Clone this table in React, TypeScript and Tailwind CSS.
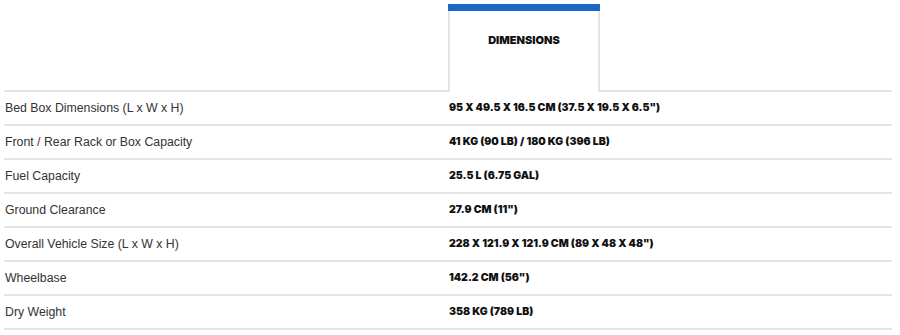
const specs: [string, string][] = [
  ["Bed Box Dimensions (L x W x H)", '95 X 49.5 X 16.5 CM (37.5 X 19.5 X 6.5")'],
  ["Front / Rear Rack or Box Capacity", "41 KG (90 LB) / 180 KG (396 LB)"],
  ["Fuel Capacity", "25.5 L (6.75 GAL)"],
  ["Ground Clearance", '27.9 CM (11")'],
  ["Overall Vehicle Size (L x W x H)", '228 X 121.9 X 121.9 CM (89 X 48 X 48")'],
  ["Wheelbase", '142.2 CM (56")'],
  ["Dry Weight", "358 KG (789 LB)"],
];

const display = "font-['Inter',sans-serif] font-black uppercase text-[#111]";

export default function App() {
  return (
    <div className="w-[900px] h-[335px] bg-white pl-[4px] pr-[8px] font-['Liberation_Sans',Arial,sans-serif]">
      {/* tab header */}
      <div className="flex pt-[4px]">
        <div className="w-[444px] border-b-2 border-[#e4e4e4]" />
        <div className="w-[152px] flex flex-col">
          <div className="h-[7px] bg-[#1c68c4]" />
          <div className="h-[81px] border-x-2 border-[#e4e4e4] flex items-center justify-center pb-[23px]">
            <span className={`${display} text-[11px]`}>Dimensions</span>
          </div>
        </div>
        <div className="flex-1 border-b-2 border-[#e4e4e4]" />
      </div>

      {specs.map(([label, value]) => (
        <div key={label} className="flex items-center h-[34px] border-b-2 border-[#e4e4e4]">
          <div className="w-[445px] pl-[1px] text-[12.3px] text-[#333]">{label}</div>
          <div className={`${display} text-[10.5px]`}>{value}</div>
        </div>
      ))}
    </div>
  );
}
